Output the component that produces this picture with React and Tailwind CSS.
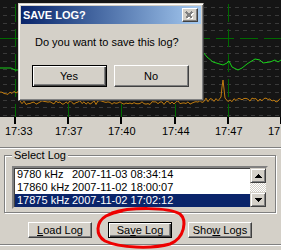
import React from 'react';

const ticks = [
  { x: 15, label: '17:33' },
  { x: 68, label: '17:37' },
  { x: 121, label: '17:40' },
  { x: 175, label: '17:44' },
  { x: 228, label: '17:47' },
  { x: 281, label: '17' },
];

const logs = [
  { freq: '9780 kHz', date: '2007-11-03 08:34:14' },
  { freq: '17860 kHz', date: '2007-11-02 18:00:07' },
  { freq: '17875 kHz', date: '2007-11-02 17:02:12', selected: true },
];

function rnd(i, s) {
  const v = Math.sin(i * 12.9898 + s * 78.233) * 43758.5453;
  return v - Math.floor(v);
}

// green signal, hand-picked from the trace
const greenPts = [
  [0, 68], [11, 68], [13, 69], [15, 70], [19, 70], [120, 60], [203, 52], [207, 57], [213, 62],
  [223, 65], [227, 63], [229, 61], [232, 67], [238, 70], [242, 68], [247, 64], [250, 62],
  [255, 59], [260, 60], [263, 63], [270, 62], [275, 60], [278, 62], [281, 60],
];

function orangePts() {
  const pts = [];
  for (let x = 0; x <= 281; x += 2) {
    if (x >= 220 && x <= 226) continue;
    const base = x < 19 ? 93 : x < 203 ? 102.5 : 100;
    pts.push([x, base + (rnd(x, 3) - 0.5) * 4]);
    if (x === 218) {
      pts.push([221, 97], [222, 87], [223, 80], [224, 89], [225, 98]);
    }
  }
  return pts;
}

const toPath = (pts) => pts.map((p, i) => `${i ? 'L' : 'M'}${p[0]} ${p[1].toFixed(1)}`).join(' ');

function Chart() {
  const greyRows = [7.5, 15.5, 23.5, 30.5, 46.5, 53.5, 61.5, 69.5, 76.5, 84.5, 92.5, 100.5, 107.5, 115.5];
  return (
    <svg width="281" height="117" className="block">
      <rect width="281" height="117" fill="#151515" />
      {greyRows.map((y) => (
        <line key={y} x1="3" x2="281" y1={y} y2={y} stroke="#3a3a3a" strokeDasharray="4 4" shapeRendering="crispEdges" />
      ))}
      <line x1="0" x2="281" y1="38.5" y2="38.5" stroke="#006a00" strokeDasharray="18 6" shapeRendering="crispEdges" />
      {ticks.map((t) => (
        <line key={t.x} x1={t.x + 0.5} x2={t.x + 0.5} y1="4" y2="117" stroke="#006a00" strokeDasharray="18 7" shapeRendering="crispEdges" />
      ))}
      <path d={toPath(orangePts())} fill="none" stroke="#c07c10" strokeWidth="1" />
      <path d={toPath(greenPts)} fill="none" stroke="#18d018" strokeWidth="1" />
    </svg>
  );
}

function WinButton({ children, isDefault, className = '' }) {
  const edge = isDefault
    ? 'border border-black shadow-[inset_1px_1px_0_#fff,inset_-1px_-1px_0_#404040,inset_-2px_-2px_0_#808080]'
    : 'border border-t-white border-l-white border-r-[#404040] border-b-[#404040] shadow-[inset_-1px_-1px_0_#808080]';
  return (
    <div className={`flex items-center justify-center bg-[#d4d0c8] text-[11px] leading-[13px] text-black ${edge} ${className}`}>
      {children}
    </div>
  );
}

function SaveDialog() {
  return (
    <div className="absolute left-[18px] top-[3px] w-[186px] h-[98px] bg-[#d4d0c8] border border-t-[#d4d0c8] border-l-[#d4d0c8] border-r-[#404040] border-b-[#404040] shadow-[inset_1px_1px_0_#fff,inset_-1px_-1px_0_#808080] p-[2px] flex flex-col">
      {/* title bar */}
      <div className="h-[18px] flex items-center justify-between bg-gradient-to-r from-[#0a246a] to-[#a6caf0] pl-[2px]">
        <span className="text-white font-bold text-[11px] leading-[13px]">SAVE LOG?</span>
        <div className="w-[16px] h-[14px] mr-[3px] bg-[#d4d0c8] border border-t-white border-l-white border-r-[#404040] border-b-[#404040] shadow-[inset_-1px_-1px_0_#808080] flex items-center justify-center">
          <svg width="10" height="9" viewBox="0 0 10 9" shapeRendering="crispEdges">
            <path d="M2 2 L8 8 M8 2 L2 8" stroke="#fff" strokeWidth="1.5" />
            <path d="M1 1 L7 7 M7 1 L1 7" stroke="#808080" strokeWidth="1.5" />
          </svg>
        </div>
      </div>
      <div className="pl-[14px] pt-[12px] text-[11px] leading-[13px] text-black">Do you want to save this log?</div>
      <div className="flex justify-center gap-[7px] mt-[16px] pr-[2px]">
        <WinButton isDefault className="w-[75px] h-[22px]">Yes</WinButton>
        <WinButton className="w-[75px] h-[22px]">No</WinButton>
      </div>
    </div>
  );
}

function ScrollArrow({ down }) {
  return (
    <div className="h-[15px] bg-[#d4d0c8] border border-t-[#d4d0c8] border-l-[#d4d0c8] border-r-[#404040] border-b-[#404040] shadow-[inset_1px_1px_0_#fff,inset_-1px_-1px_0_#808080] flex items-center justify-center">
      <svg width="7" height="4" viewBox="0 0 7 4" shapeRendering="crispEdges">
        <path d={down ? 'M0 0 H7 L3.5 4 Z' : 'M3.5 0 L7 4 H0 Z'} fill="#000" />
      </svg>
    </div>
  );
}

export default function App() {
  return (
    <div className="relative w-[281px] h-[250px] overflow-hidden bg-[#d4d0c8] font-['Liberation_Sans',Arial,sans-serif] text-black">
      <Chart />

      {/* time axis */}
      <div className="relative h-[30px]">
        {ticks.map((t, i) => (
          <React.Fragment key={t.x}>
            <div className="absolute top-0 w-[2px] h-[7px] bg-black" style={{ left: t.x - 1 }} />
            <div className="absolute top-[8px] text-[11px] leading-[13px] whitespace-nowrap" style={{ left: i === 0 ? 5 : t.x - 13 }}>
              {t.label}
            </div>
          </React.Fragment>
        ))}
      </div>

      <div className="h-[2px] border-t border-t-[#808080] border-b border-b-white" />

      {/* Select Log group */}
      <div className="relative ml-[4px] mt-[6px] w-[272px] border border-[#808080] shadow-[inset_1px_1px_0_#fff,1px_1px_0_#fff] pl-[7px] pt-[10px] pb-[3px]">
        <span className="absolute -top-[7px] left-[7px] px-[2px] bg-[#d4d0c8] text-[11px] leading-[13px]">Select Log</span>
        <div className="w-[256px] h-[43px] bg-white border-2 border-t-[#808080] border-l-[#808080] border-r-[#d4d0c8] border-b-[#d4d0c8] shadow-[inset_1px_1px_0_#404040] flex">
          <div className="flex-1 flex flex-col pl-[1px]">
            {logs.map((l) => (
              <div key={l.date} className={`h-[13px] flex text-[11px] leading-[13px] pl-[2px] ${l.selected ? 'bg-[#0a246a] text-white' : ''}`}>
                <span className="w-[55px] whitespace-nowrap">{l.freq}</span>
                <span className="whitespace-nowrap">{l.date}</span>
              </div>
            ))}
          </div>
          <div className="w-[16px] flex flex-col">
            <ScrollArrow />
            <div className="flex-1 bg-[image:repeating-conic-gradient(#fff_0%_25%,#d4d0c8_0%_50%)] bg-[length:2px_2px]" />
            <ScrollArrow down />
          </div>
        </div>
      </div>

      {/* buttons */}
      <div className="flex gap-[16px] pl-[28px] mt-[9px]">
        <WinButton className="w-[64px] h-[16px]"><span><span className="underline">L</span>oad Log</span></WinButton>
        <WinButton isDefault className="w-[64px] h-[16px]"><span>Sa<span className="underline">v</span>e Log</span></WinButton>
        <WinButton className="w-[64px] h-[16px]"><span>Sho<span className="underline">w</span> Logs</span></WinButton>
      </div>

      <div className="mt-[6px] h-[2px] border-t border-t-[#808080] border-b border-b-white" />

      <SaveDialog />

      {/* red marker round Save Log */}
      <svg className="absolute left-0 top-0 pointer-events-none" width="281" height="250">
        <path
          d="M112 213 C130 207 168 207 180 214 C187 220 185 238 170 244 C152 249 120 248 105 241 C95 235 96 222 106 216 C110 214 116 212 122 211"
          fill="none"
          stroke="#ee0000"
          strokeWidth="3"
          strokeLinecap="round"
        />
      </svg>
    </div>
  );
}
